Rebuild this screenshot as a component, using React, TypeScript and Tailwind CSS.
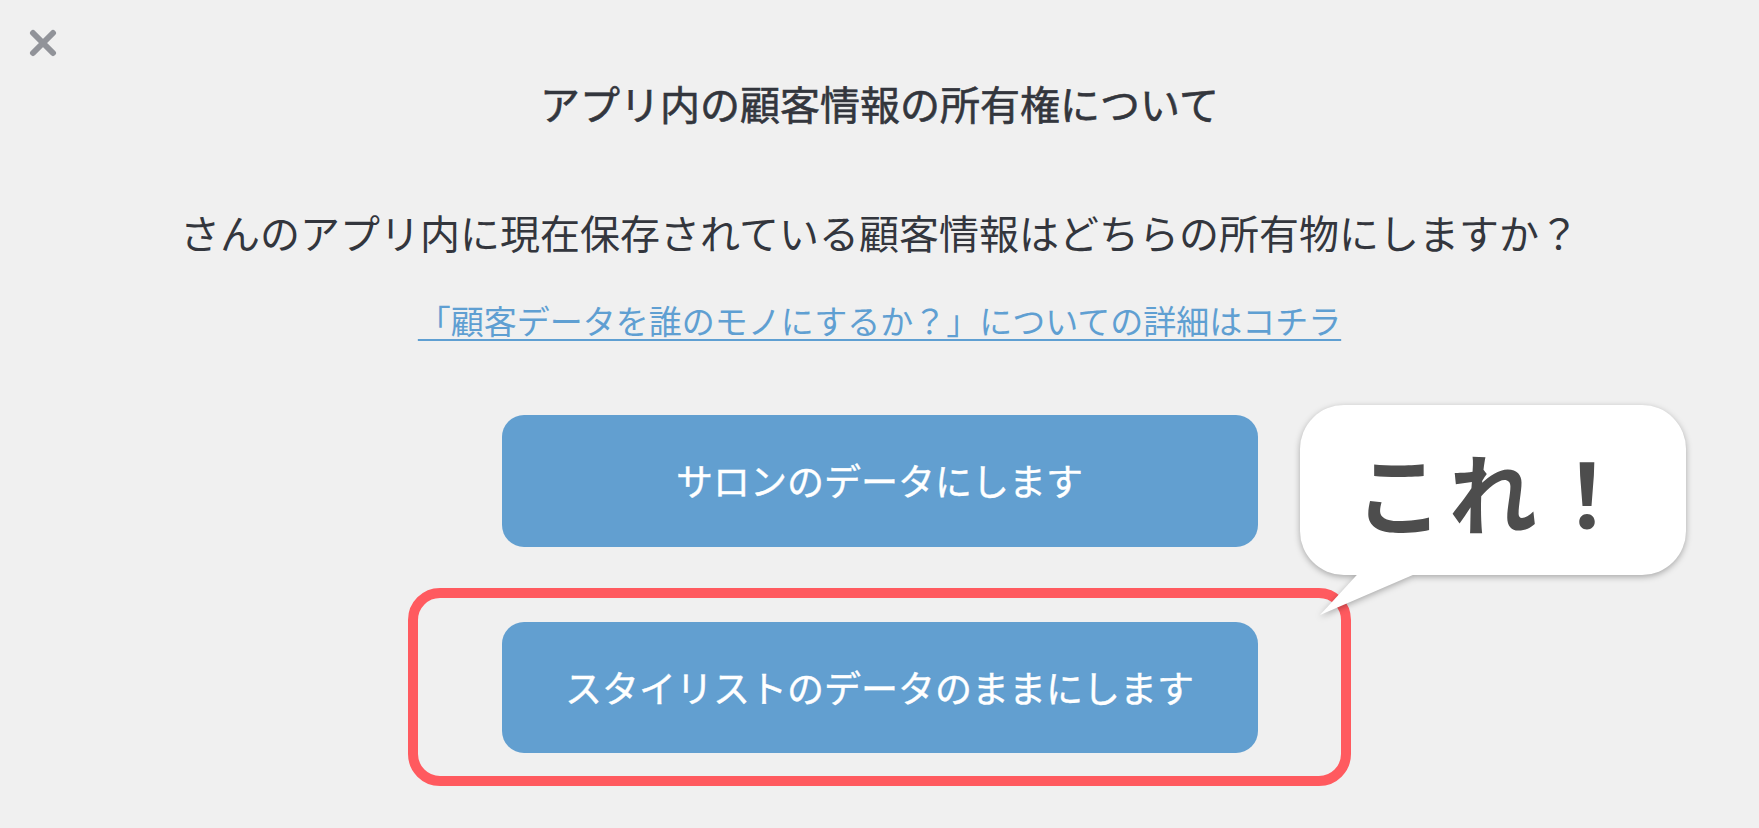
import { useState } from 'react'

const FONT = { fontFamily: '"Noto Sans CJK JP", "Noto Sans", sans-serif' }

function CloseIcon() {
  return (
    <svg width="28" height="28" viewBox="0 0 28 28" fill="none">
      <path d="M4 4 L24 24 M24 4 L4 24" stroke="#919399" strokeWidth="6" strokeLinecap="round" />
    </svg>
  )
}

export default function App() {
  const [choice, setChoice] = useState<'salon' | 'stylist' | null>(null)

  return (
    <div className="relative w-full h-[828px] overflow-hidden bg-[#f0f0f0] text-[#33363d]" style={FONT}>
      {/* 閉じる */}
      <button className="absolute left-[29px] top-[29px] flex items-center justify-center">
        <CloseIcon />
      </button>

      <div className="flex flex-col items-center pt-[75px]">
        <h1 className="text-[40px] leading-[56px] font-normal [-webkit-text-stroke:0.6px_#33363d]">
          アプリ内の顧客情報の所有権について
        </h1>

        <p className="mt-[73px] text-[40px] leading-[56px]">
          さんのアプリ内に現在保存されている顧客情報はどちらの所有物にしますか？
        </p>

        <a
          href="#"
          className="mt-[37px] text-[33px] leading-[46px] text-[#5f9fd2] underline decoration-2 underline-offset-[5px]"
        >
          「顧客データを誰のモノにするか？」についての詳細はコチラ
        </a>

        <div className="mt-[72px] flex flex-col gap-[75px]">
          <button
            onClick={() => setChoice('salon')}
            className="w-[756px] h-[132px] rounded-[22px] bg-[#629fd0] text-white text-[37px] font-normal [-webkit-text-stroke:0.4px_#ffffff] flex items-center justify-center"
          >
            サロンのデータにします
          </button>

          <div className="relative">
            <button
              onClick={() => setChoice('stylist')}
              className="w-[756px] h-[131px] rounded-[22px] bg-[#629fd0] text-white text-[37px] font-normal [-webkit-text-stroke:0.4px_#ffffff] flex items-center justify-center"
            >
              スタイリストのデータのままにします
            </button>
            {/* 強調枠 */}
            <div className="pointer-events-none absolute -left-[94px] -right-[93px] -top-[34px] -bottom-[33px] rounded-[32px] border-[10px] border-[#ff5a5f]" />
          </div>
        </div>
        {choice && <span className="sr-only">{choice}</span>}
      </div>

      {/* 吹き出し */}
      <div className="absolute left-[1300px] top-[405px] w-[386px] h-[170px] drop-shadow-[0_2px_3px_rgba(0,0,0,0.3)]">
        <div className="w-full h-full rounded-[44px] bg-white flex items-center justify-center">
          <span className="text-[88px] leading-none font-bold text-[#4d4d4d] tracking-[6px] pl-[6px]">これ！</span>
        </div>
        <svg className="absolute left-0 top-[160px]" width="140" height="52" viewBox="0 0 140 52">
          <polygon points="66,0 20,50 136,0" fill="#ffffff" />
        </svg>
      </div>
    </div>
  )
}
